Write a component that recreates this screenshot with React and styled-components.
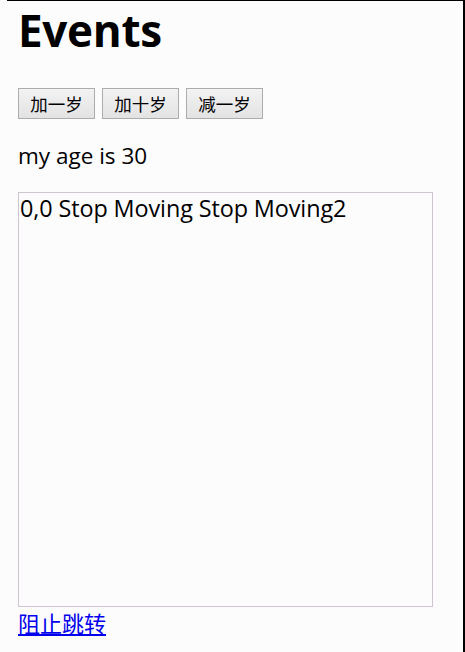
import React, { useState } from 'react'
import styled, { createGlobalStyle } from 'styled-components'

const GlobalStyle = createGlobalStyle`
  html, body {
    margin: 0;
    padding: 0;
    background: #fdfcfd;
  }
  body {
    font-family: "Open Sans", "Noto Sans CJK SC", sans-serif;
    font-size: 22px;
    color: #000;
  }
`

const Frame = styled.div`
  margin-left: 7px;
  height: 652px;
  box-sizing: border-box;
  border-top: 1px solid #000;
  border-right: 2px solid #000;
  padding-left: 11px;
  overflow: hidden;
`

const Title = styled.h1`
  margin: 0 0 29px;
  font-size: 44px;
  font-weight: 700;
  line-height: 58px;
  letter-spacing: -0.3px;
`

const Buttons = styled.div`
  display: flex;
  gap: 7px;
`

const Button = styled.button`
  width: 77px;
  height: 31px;
  padding: 0;
  font-family: "Noto Sans CJK SC", sans-serif;
  font-size: 17.5px;
  color: #000;
  border: 1px solid #acacac;
  border-radius: 0;
  background: linear-gradient(#f2f2f2, #e3e3e3);
`

const Age = styled.p`
  margin: 22px 0 21px;
  font-size: 22.5px;
  line-height: 30px;
`

const Box = styled.div`
  width: 415px;
  height: 415px;
  box-sizing: border-box;
  border: 1px solid #cfc5d1;
  padding: 0 1px;
  font-size: 23.4px;
  line-height: 30px;
  letter-spacing: -0.1px;
`

const Link = styled.a`
  display: inline-block;
  font-family: "Noto Sans CJK SC", sans-serif;
  font-size: 22px;
  line-height: 30px;
  color: #0000ee;
  text-decoration: underline;
`

export default function App() {
  const [age, setAge] = useState(30)
  return (
    <>
      <GlobalStyle />
      <Frame>
        <Title>Events</Title>
        <Buttons>
          <Button onClick={() => setAge(age + 1)}>加一岁</Button>
          <Button onClick={() => setAge(age + 10)}>加十岁</Button>
          <Button onClick={() => setAge(age - 1)}>减一岁</Button>
        </Buttons>
        <Age>my age is {age}</Age>
        <Box>0,0 Stop Moving Stop Moving2</Box>
        <Link href="#" onClick={e => e.preventDefault()}>阻止跳转</Link>
      </Frame>
    </>
  )
}
